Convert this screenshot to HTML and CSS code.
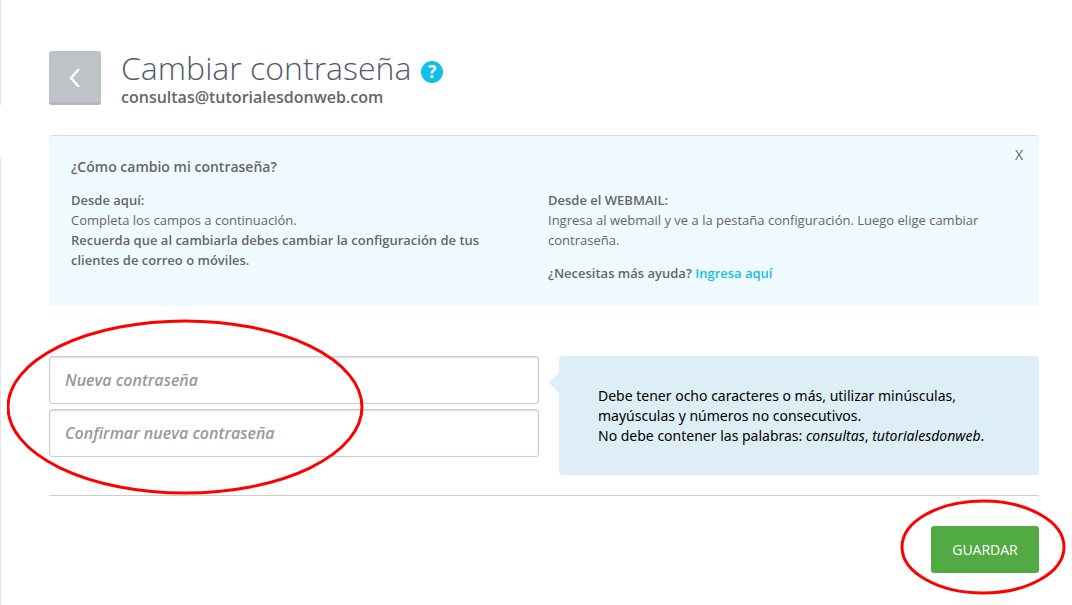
FILE: index.html
```
<!DOCTYPE html>
<html lang="es">
<head>
    <meta charset="utf-8">
    <title>Cambiar contraseña</title>
    <link rel="stylesheet" href="styles.css">
</head>
<body>
    <main class="page">
        <header class="page-header">
            <button type="button" class="btn-back" aria-label="Volver">
                <svg width="12" height="20" viewBox="0 0 12 20" fill="none" stroke="#fff" stroke-width="2.4">
                    <path d="M10 2 L2 11 L10 20"/>
                </svg>
            </button>
            <div class="page-title">
                <h1>Cambiar contraseña <a href="#ayuda" class="help-icon">?</a></h1>
                <p>consultas@tutorialesdonweb.com</p>
            </div>
        </header>

        <section class="help-box" id="ayuda">
            <button type="button" class="btn-close">X</button>
            <h2>¿Cómo cambio mi contraseña?</h2>
            <div class="help-columns">
                <div class="help-column">
                    <p><strong>Desde aquí:</strong><br>
                    Completa los campos a continuación.<br>
                    <strong>Recuerda que al cambiarla debes cambiar la configuración de tus clientes de correo o móviles.</strong></p>
                </div>
                <div class="help-column">
                    <p><strong>Desde el WEBMAIL:</strong><br>
                    Ingresa al webmail y ve a la pestaña configuración. Luego elige cambiar contraseña.</p>
                    <p><strong>¿Necesitas más ayuda? <a href="#">Ingresa aquí</a></strong></p>
                </div>
            </div>
        </section>

        <form>
            <div class="form-row">
                <div class="fields">
                    <input type="password" name="password" aria-label="Nueva contraseña" placeholder="Nueva contraseña">
                    <input type="password" name="confirm" aria-label="Confirmar nueva contraseña" placeholder="Confirmar nueva contraseña">
                    <svg class="mark mark-fields" viewBox="0 0 357 176">
                        <ellipse cx="178" cy="88" rx="177" ry="86"/>
                    </svg>
                </div>
                <div class="tip">
                    Debe tener ocho caracteres o más, utilizar minúsculas, mayúsculas y números no consecutivos.<br>
                    No debe contener las palabras: <em>consultas</em>, <em>tutorialesdonweb</em>.
                </div>
            </div>
            <div class="form-actions">
                <button type="submit" class="btn-save">GUARDAR</button>
                <svg class="mark mark-save" viewBox="0 0 166 96">
                    <ellipse cx="83" cy="48" rx="81" ry="46"/>
                </svg>
            </div>
        </form>
    </main>
</body>
</html>
```
FILE: styles.css
```
* {
    box-sizing: border-box;
}

body {
    margin: 0;
    background-color: #fff;
    color: #666;
    font-family: "Open Sans", sans-serif;
    font-size: 13px;
    line-height: 20px;
}

h1, h2, p {
    margin: 0;
}

strong {
    font-weight: 600;
}

a {
    color: #13bfe9;
    text-decoration: none;
}

button {
    padding: 0;
    border: none;
    font-family: inherit;
    cursor: pointer;
}

.page {
    position: relative;
    min-height: 100vh;
    padding: 51px 33px 32px 48px;
    border-left: 1px solid #e6e2e6;
}

.page::before {
    content: "";
    position: absolute;
    top: 105px;
    left: -1px;
    width: 1px;
    height: 52px;
    background-color: #fff;
}

.page-header {
    display: flex;
    gap: 20px;
    margin-bottom: 26px;
}

.btn-back {
    display: flex;
    justify-content: center;
    align-items: center;
    width: 52px;
    height: 54px;
    background-color: #bdc3c7;
    border-bottom: 3px solid #b3b6bf;
    border-radius: 3px;
}

.page-title h1 {
    display: flex;
    align-items: center;
    gap: 10px;
    color: #55596a;
    font-size: 32px;
    font-weight: 300;
    line-height: 34px;
}

.page-title p {
    font-size: 16px;
    font-weight: 600;
    line-height: 24px;
}

.help-icon {
    width: 22px;
    height: 22px;
    margin-top: 8px;
    background-color: #13bfe9;
    border-radius: 50%;
    color: #fff;
    font-size: 17px;
    font-weight: 700;
    line-height: 22px;
    text-align: center;
}

.help-box {
    position: relative;
    margin-bottom: 50px;
    padding: 21px 22px 23px;
    background-color: #effaff;
    border-top: 1px solid #c9e2ed;
    border-radius: 4px;
}

.help-box h2 {
    margin-bottom: 13px;
    font-size: 14px;
    font-weight: 600;
}

.btn-close {
    position: absolute;
    top: 9px;
    right: 16px;
    background: none;
    color: #666;
    font-size: 14px;
    line-height: 20px;
}

.help-columns {
    display: grid;
    grid-template-columns: 1fr 1fr;
    column-gap: 8px;
}

.help-column {
    padding-right: 20px;
}

.help-column p + p {
    margin-top: 13px;
}

.form-row {
    display: grid;
    grid-template-columns: 49fr 48fr;
    align-items: start;
    column-gap: 20px;
    padding-bottom: 20px;
    border-bottom: 1px solid #ccc;
}

.fields {
    position: relative;
    display: flex;
    flex-direction: column;
    gap: 5px;
}

.fields input {
    width: 100%;
    height: 48px;
    padding: 0 15px;
    border: 1px solid #ccc;
    border-radius: 3px;
    box-shadow: inset 0 1px 2px rgba(0, 0, 0, 0.15);
    font-family: inherit;
    font-size: 16px;
    font-weight: 600;
}

.fields input::placeholder {
    color: #999;
    font-style: italic;
}

.tip {
    position: relative;
    padding: 30px 39px 29px;
    background-color: #deeef7;
    border-radius: 4px;
    color: #000;
    font-family: "Noto Sans", sans-serif;
    font-size: 14px;
}

.tip::before {
    content: "";
    position: absolute;
    top: 17px;
    left: -10px;
    border: 10px solid transparent;
    border-left-width: 0;
    border-right-color: #deeef7;
}

.form-actions {
    position: relative;
    display: flex;
    justify-content: flex-end;
    padding-top: 30px;
}

.btn-save {
    width: 108px;
    height: 47px;
    background-color: #52aa43;
    border-radius: 3px;
    color: #fff;
    font-size: 14px;
}

/* red marks drawn over the form */
.mark {
    position: absolute;
    fill: none;
    stroke: #f00;
    stroke-width: 3;
    pointer-events: none;
}

.mark-fields {
    top: -37px;
    left: -42px;
    width: 357px;
    height: 176px;
}

.mark-save {
    top: 3px;
    right: -27px;
    width: 166px;
    height: 96px;
}
```
